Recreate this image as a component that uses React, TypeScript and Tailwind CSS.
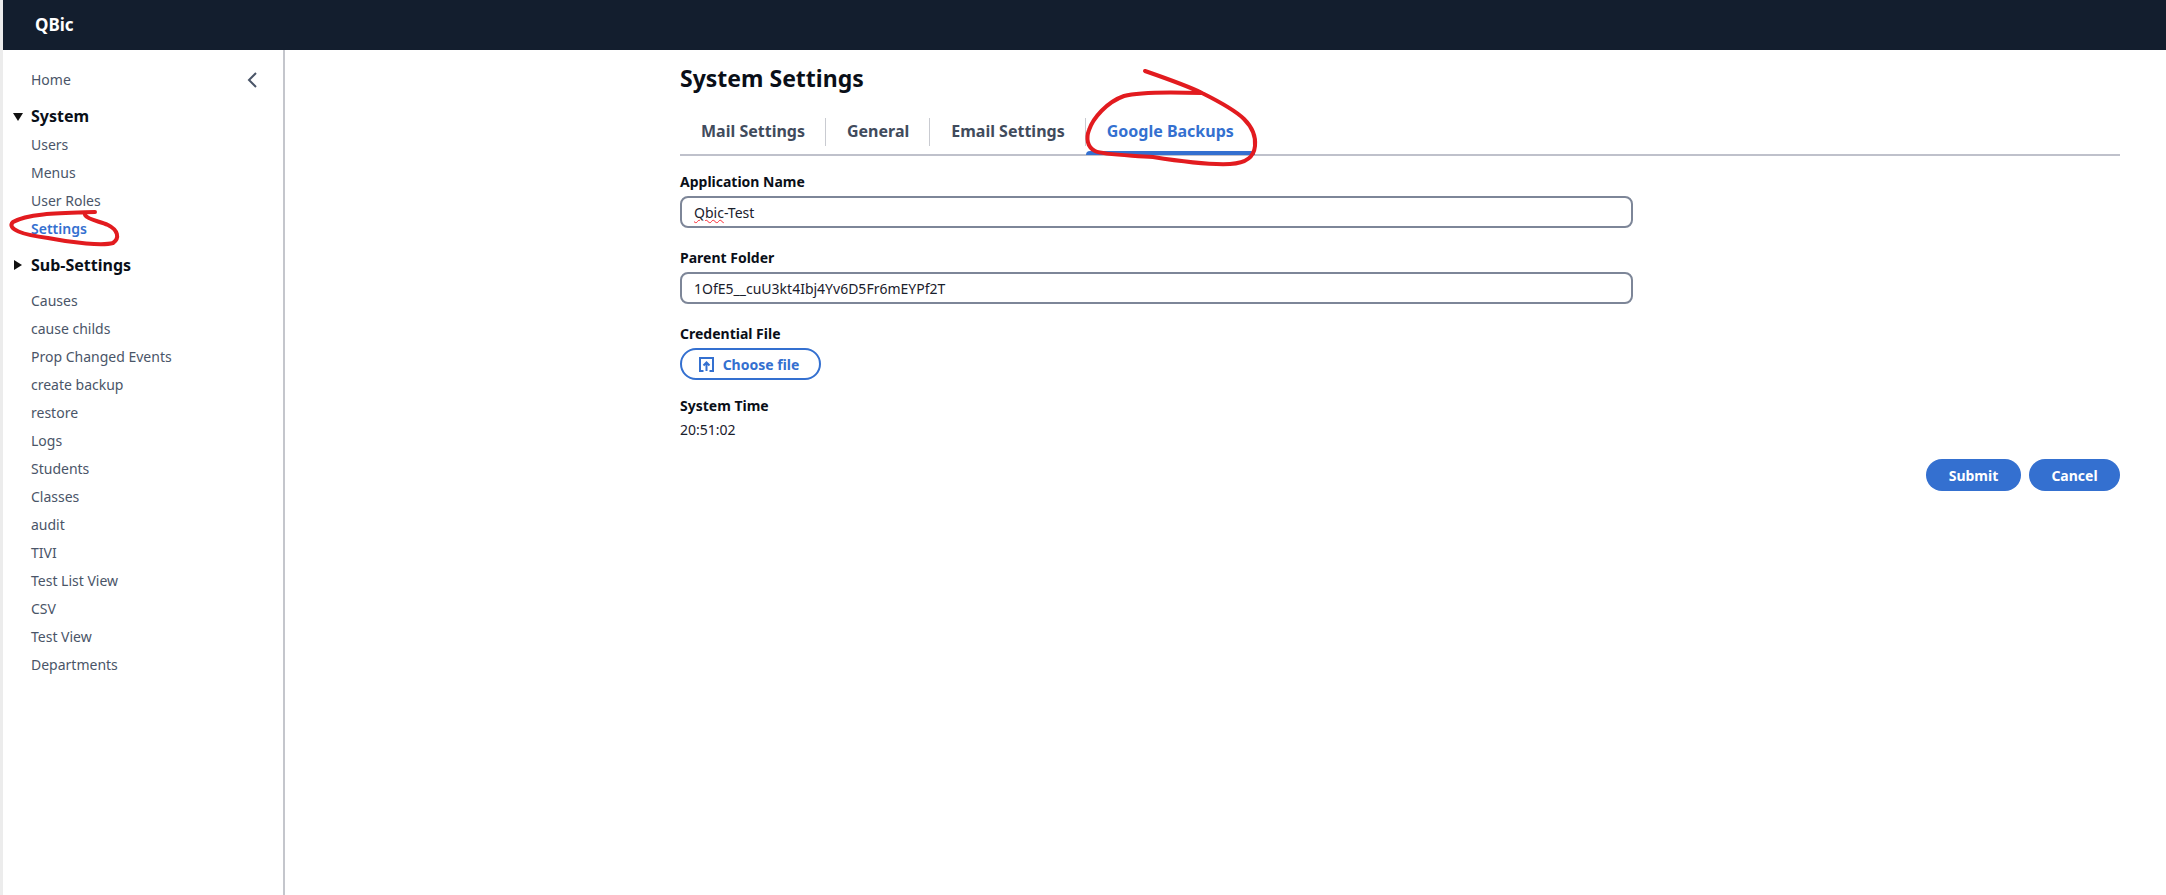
import type { ReactNode } from 'react'

const systemItems = ['Users', 'Menus', 'User Roles', 'Settings']
const subItems = [
  'Causes',
  'cause childs',
  'Prop Changed Events',
  'create backup',
  'restore',
  'Logs',
  'Students',
  'Classes',
  'audit',
  'TIVI',
  'Test List View',
  'CSV',
  'Test View',
  'Departments',
]
const tabs = ['Mail Settings', 'General', 'Email Settings', 'Google Backups']

function NavLink({ label, active }: { label: string; active?: boolean }) {
  return (
    <div className={active ? 'h-7 leading-7 text-[14px] font-semibold text-[#3470d0]' : 'h-7 leading-7 text-[14px] text-[#4a5568]'}>
      {label}
    </div>
  )
}

function Sidebar() {
  return (
    <aside className="w-[282px] shrink-0 border-r-2 border-[#c4c6cc] pl-[28px] pr-6 pt-[15px] relative">
      <div className="flex h-7 items-center justify-between">
        <span className="text-[14px] text-[#4a5568]">Home</span>
        <svg width="12" height="18" viewBox="0 0 12 18" className="mr-[1px] mt-[2px]" fill="none" stroke="#4a5568" strokeWidth="2">
          <path d="M10 2 L3 9 L10 16" />
        </svg>
      </div>
      <div className="relative mt-[9px] h-7 leading-7 text-[16px] font-bold text-[#0a0f18]">
        <svg width="10" height="8" viewBox="0 0 10 8" className="absolute left-[-18px] top-[11px]" fill="#111">
          <path d="M0 0 H10 L5 8 Z" />
        </svg>
        System
      </div>
      <div className="mt-[1px]">
        {systemItems.map(item => (
          <NavLink key={item} label={item} active={item === 'Settings'} />
        ))}
      </div>
      <div className="relative mt-[8px] h-7 leading-7 text-[16px] font-bold text-[#0a0f18]">
        <svg width="8" height="10" viewBox="0 0 8 10" className="absolute left-[-17px] top-[9px]" fill="#111">
          <path d="M0 0 V10 L8 5 Z" />
        </svg>
        Sub-Settings
      </div>
      <div className="mt-[8px]">
        {subItems.map(item => (
          <NavLink key={item} label={item} />
        ))}
      </div>
    </aside>
  )
}

function Tabs() {
  return (
    <div className="mt-[15px] flex h-[45px] items-stretch border-b-2 border-[#bfc1cb]">
      {tabs.map((tab, i) => {
        const active = i === tabs.length - 1
        return (
          <div key={tab} className="relative flex items-center px-[21px] pb-[3px] text-[16px] font-bold">
            <span className={active ? 'text-[#3470d0]' : 'text-[#414b5c]'}>{tab}</span>
            {i < tabs.length - 1 && <span className="absolute right-0 top-[7px] h-[28px] w-px bg-[#c9cbd1]" />}
            {active && <span className="absolute bottom-[-1px] left-0 right-0 h-[4px] rounded-t-sm bg-[#3470d0]" />}
          </div>
        )
      })}
    </div>
  )
}

function Field({ label, children, first }: { label: string; children: ReactNode; first?: boolean }) {
  return (
    <div className={first ? 'mt-[16px]' : 'mt-[20px]'}>
      <div className="h-[19px] leading-[19px] text-[14px] font-bold text-[#0a0f18]">{label}</div>
      <div className="mt-[5px] flex h-[32px] w-[953px] items-center rounded-lg border-2 border-[#7d8698] px-[12px] text-[14px] text-[#1a202c]">
        {children}
      </div>
    </div>
  )
}

function Annotations() {
  return (
    <svg className="pointer-events-none absolute left-0 top-0" width="2166" height="895" fill="none" stroke="#e21b1f" strokeWidth="4" strokeLinecap="round" strokeLinejoin="round">
      <path d="M92 212 C60 213 25 213 10 222 C3 229 20 235 45 238 C70 243 100 246 110 243 C117 238 115 230 105 225 C96 221 85 220 82 215" />
      <path d="M1142 71 C1165 79 1185 86 1199 93 C1215 101 1232 110 1241 119 C1250 128 1253 136 1252 146 C1251 156 1245 163 1227 164 C1205 165 1175 161 1150 157 C1125 155 1100 155 1092 151 C1084 147 1083 138 1086 130 C1090 118 1104 102 1121 96 C1135 92 1170 92 1199 93" />
    </svg>
  )
}

export default function App() {
  return (
    <div className="relative flex h-[895px] w-[2166px] flex-col overflow-hidden border-l-[3px] border-[#ececec] bg-white font-['Noto_Sans','Open_Sans',sans-serif]">
      <header className="flex h-[50px] shrink-0 items-center bg-[#131e2e] pl-[32px] text-[17px] font-bold text-white">QBic</header>
      <div className="flex min-h-0 flex-1">
        <Sidebar />
        <main className="flex-1 pl-[395px] pr-[46px]">
          <h1 className="mt-[10px] h-[36px] leading-[36px] text-[23px] font-bold text-[#0a0f18]">System Settings</h1>
          <Tabs />
          <Field first label="Application Name">
            <span>
              <span className="underline decoration-wavy decoration-red-500 decoration-1">Qbic</span>-Test
            </span>
          </Field>
          <Field label="Parent Folder">1OfE5__cuU3kt4Ibj4Yv6D5Fr6mEYPf2T</Field>
          <div className="mt-[20px] h-[19px] leading-[19px] text-[14px] font-bold text-[#0a0f18]">Credential File</div>
          <button className="mt-[5px] flex h-[32px] w-[141px] items-center justify-center gap-[9px] rounded-full border-2 border-[#3470d0] pr-[3px] text-[14px] font-bold text-[#3470d0]">
            <svg width="15" height="15" viewBox="0 0 15 15" fill="none" stroke="#3470d0" strokeWidth="2">
              <path d="M4.5 14 H1 V1 H14 V14 H10.5" />
              <path d="M7.5 14 V6 M4.5 8.5 L7.5 5.5 L10.5 8.5" />
            </svg>
            Choose file
          </button>
          <div className="mt-[16px] h-[19px] leading-[19px] text-[14px] font-bold text-[#0a0f18]">System Time</div>
          <div className="mt-[5px] h-[19px] leading-[19px] text-[14px] text-[#1a202c]">20:51:02</div>
          <div className="mt-[20px] flex justify-end gap-[8px]">
            <button className="h-[32px] w-[95px] rounded-full bg-[#3470d0] text-[14px] font-bold text-white">Submit</button>
            <button className="h-[32px] w-[91px] rounded-full bg-[#3470d0] text-[14px] font-bold text-white">Cancel</button>
          </div>
        </main>
      </div>
      <Annotations />
    </div>
  )
}
